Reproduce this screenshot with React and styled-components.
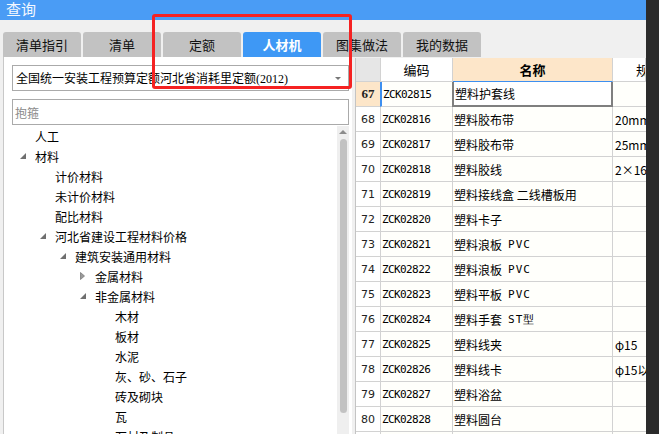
import styled, { createGlobalStyle } from "styled-components";

const GlobalStyle = createGlobalStyle`
  html, body {
    margin: 0;
    padding: 0;
    background: #f0f0f0;
    overflow: hidden;
  }
  body {
    font-family: "Noto Sans CJK SC", "DejaVu Sans", sans-serif;
    font-size: 12px;
    color: #000;
  }
  * {
    box-sizing: border-box;
  }
`;

const Frame = styled.div`
  position: relative;
  width: 659px;
  height: 434px;
  display: flex;
  overflow: hidden;
`;

const Main = styled.div`
  flex: 1;
  display: flex;
  flex-direction: column;
  min-width: 0;
`;

const DarkStrip = styled.div`
  width: 13px;
  background: #2b2b2b;
`;

const TitleBar = styled.div`
  height: 20px;
  flex-shrink: 0;
  background: #4a9cf5;
  color: #f4f8ff;
  font-size: 15px;
  line-height: 18px;
  padding-left: 6px;
  overflow: hidden;
`;

const TabBar = styled.div`
  display: flex;
  gap: 2px;
  padding: 12px 0 0 3px;
  height: 37px;
  flex-shrink: 0;
`;

const Tab = styled.div`
  width: 78px;
  height: 25px;
  border-radius: 3px 3px 0 0;
  background: ${(p) => (p.$active ? "#3e98f5" : "#c2c2c2")};
  color: ${(p) => (p.$active ? "#fff" : "#111")};
  font-weight: ${(p) => (p.$active ? "bold" : "normal")};
  font-size: 13px;
  display: flex;
  align-items: center;
  justify-content: center;
`;

const Content = styled.div`
  flex: 1;
  display: flex;
  gap: 3px;
  padding-left: 3px;
  min-height: 0;
`;

const LeftPanel = styled.div`
  width: 349px;
  flex-shrink: 0;
  background: #fff;
  border-left: 1px solid #c8c8c8;
  padding: 8px 3px 0 8px;
  display: flex;
  flex-direction: column;
`;

const Select = styled.div`
  height: 26px;
  border: 1px solid #aaa;
  display: flex;
  align-items: center;
  justify-content: space-between;
  padding: 0 7px 0 3px;
  white-space: nowrap;
  font-size: 12px;
`;

const Paren = styled.span`
  font-family: "Liberation Serif", serif;
  font-size: 12px;
`;

const Caret = styled.span`
  width: 0;
  height: 0;
  border-left: 3px solid transparent;
  border-right: 3px solid transparent;
  border-top: 3px solid #777;
`;

const Search = styled.div`
  margin-top: 8px;
  height: 26px;
  border: 1px solid #aaa;
  color: #8a8a8a;
  display: flex;
  align-items: center;
  padding-left: 2px;
`;

const TreeArea = styled.div`
  flex: 1;
  display: flex;
  margin-top: 1px;
  min-height: 0;
`;

const TreeList = styled.div`
  flex: 1;
  overflow: hidden;
`;

const TreeRow = styled.div`
  height: 20px;
  display: flex;
  align-items: center;
  padding-left: ${(p) => 8 + p.$level * 20}px;
  white-space: nowrap;
`;

const Toggle = styled.span`
  width: 15px;
  display: flex;
  align-items: center;
`;

const ScrollBar = styled.div`
  width: 12px;
  background: #efefef;
  display: flex;
  flex-direction: column;
  align-items: center;
  padding-top: 4px;
`;

const UpArrow = styled.span`
  width: 0;
  height: 0;
  border-left: 4px solid transparent;
  border-right: 4px solid transparent;
  border-bottom: 4px solid #8c8c8c;
`;

const Thumb = styled.div`
  margin-top: 5px;
  width: 7px;
  height: 274px;
  border-radius: 4px;
  background: #c2c2c2;
`;

const Grid = styled.div`
  flex: 1;
  margin-top: 1px;
  border-left: 1px solid #c4c4c4;
  display: grid;
  grid-template-columns: 25px 72px 160px 1fr;
  grid-auto-rows: 25px;
  grid-template-rows: 24px;
  align-content: start;
  background: #fffffb;
  overflow: hidden;
`;

const HeadCell = styled.div`
  border-right: 1px solid #d2d2d2;
  border-bottom: 1px solid ${(p) => (p.$sel ? "#3d8ff0" : "#d2d2d2")};
  background: ${(p) => p.$bg || "#fff"};
  font-weight: ${(p) => (p.$bold ? "bold" : "normal")};
  font-size: 13px;
  display: flex;
  align-items: center;
  justify-content: ${(p) => (p.$start ? "flex-start" : "center")};
  padding-left: ${(p) => (p.$start ? "23px" : "0")};
  white-space: nowrap;
  overflow: hidden;
`;

const NumCell = styled.div`
  border-right: 1px solid #d2d2d2;
  border-bottom: 1px solid #d2d2d2;
  background: ${(p) => (p.$cur ? "#fde6c9" : "#fff")};
  font-family: ${(p) => (p.$cur ? `"Liberation Serif", serif` : `"DejaVu Sans", sans-serif`)};
  font-weight: ${(p) => (p.$cur ? "bold" : "normal")};
  font-size: ${(p) => (p.$cur ? "13px" : "11px")};
  display: flex;
  align-items: center;
  justify-content: center;
  color: #222;
`;

const CodeCell = styled.div`
  border-right: 1px solid #d2d2d2;
  border-bottom: 1px solid #d2d2d2;
  border-left: ${(p) => (p.$cur ? "2px solid #3d8ff0" : "none")};
  margin-left: ${(p) => (p.$cur ? "-1px" : "0")};
  font-family: "DejaVu Sans Mono", monospace;
  font-size: 11px;
  letter-spacing: -0.6px;
  display: flex;
  align-items: center;
  padding-left: 1px;
`;

const NameCell = styled.div`
  border-right: ${(p) => (p.$cur ? "2px solid #7f7f7f" : "1px solid #d2d2d2")};
  border-bottom: ${(p) => (p.$cur ? "2px solid #7f7f7f" : "1px solid #d2d2d2")};
  border-left: ${(p) => (p.$cur ? "2px solid #7f7f7f" : "none")};
  margin-left: ${(p) => (p.$cur ? "-1px" : "0")};
  background: ${(p) => (p.$cur ? "#fff" : "transparent")};
  display: flex;
  align-items: center;
  padding-left: 1px;
  white-space: nowrap;
`;

const Latin = styled.span`
  font-family: "DejaVu Sans Mono", monospace;
  font-size: 11px;
  letter-spacing: 1px;
  margin-left: 6px;
`;

const SpecCell = styled.div`
  border-bottom: 1px solid #d2d2d2;
  display: flex;
  align-items: center;
  padding-left: 2px;
  white-space: nowrap;
  overflow: hidden;
`;

const Annotation = styled.div`
  position: absolute;
  left: 152px;
  top: 14px;
  width: 200px;
  height: 75px;
  border: 3px solid #f52222;
  border-radius: 3px;
  pointer-events: none;
`;

const tabs = ["清单指引", "清单", "定额", "人材机", "图集做法", "我的数据"];

const tree = [
  { label: "人工", level: 0 },
  { label: "材料", level: 0, open: true },
  { label: "计价材料", level: 1 },
  { label: "未计价材料", level: 1 },
  { label: "配比材料", level: 1 },
  { label: "河北省建设工程材料价格", level: 1, open: true },
  { label: "建筑安装通用材料", level: 2, open: true },
  { label: "金属材料", level: 3, open: false },
  { label: "非金属材料", level: 3, open: true },
  { label: "木材", level: 4 },
  { label: "板材", level: 4 },
  { label: "水泥", level: 4 },
  { label: "灰、砂、石子", level: 4 },
  { label: "砖及砌块", level: 4 },
  { label: "瓦", level: 4 },
  { label: "石材及制品", level: 4 },
];

const rows = [
  { n: 67, code: "ZCK02815", name: "塑料护套线" },
  { n: 68, code: "ZCK02816", name: "塑料胶布带", spec: "20mm×" },
  { n: 69, code: "ZCK02817", name: "塑料胶布带", spec: "25mm×" },
  { n: 70, code: "ZCK02818", name: "塑料胶线", spec: "2×16," },
  { n: 71, code: "ZCK02819", name: "塑料接线盒 二线槽板用" },
  { n: 72, code: "ZCK02820", name: "塑料卡子" },
  { n: 73, code: "ZCK02821", name: "塑料浪板", latin: "PVC" },
  { n: 74, code: "ZCK02822", name: "塑料浪板", latin: "PVC" },
  { n: 75, code: "ZCK02823", name: "塑料平板", latin: "PVC" },
  { n: 76, code: "ZCK02824", name: "塑料手套", latin: "ST型" },
  { n: 77, code: "ZCK02825", name: "塑料线夹", spec: "φ15" },
  { n: 78, code: "ZCK02826", name: "塑料线卡", spec: "φ15以" },
  { n: 79, code: "ZCK02827", name: "塑料浴盆" },
  { n: 80, code: "ZCK02828", name: "塑料圆台" },
  { n: 81, code: "ZCK02829", name: "塑料圆台" },
];

const Arrow = ({ open }) =>
  open ? (
    <svg width="6" height="6" viewBox="0 0 6 6">
      <polygon points="6,0 6,6 0,6" fill="#6f6f6f" />
    </svg>
  ) : (
    <svg width="5" height="8" viewBox="0 0 5 8">
      <polygon points="0.5,0.5 4.5,4 0.5,7.5" fill="#9a9a9a" stroke="#7a7a7a" strokeWidth="0.8" />
    </svg>
  );

export default function App() {
  return (
    <Frame>
      <GlobalStyle />
      <Main>
        <TitleBar>查询</TitleBar>
        <TabBar>
          {tabs.map((t) => (
            <Tab key={t} $active={t === "人材机"}>
              {t}
            </Tab>
          ))}
        </TabBar>
        <Content>
          <LeftPanel>
            <Select>
              <span>
                全国统一安装工程预算定额河北省消耗里定额<Paren>(2012)</Paren>
              </span>
              <Caret />
            </Select>
            <Search>抱箍</Search>
            <TreeArea>
              <TreeList>
                {tree.map((item, i) => (
                  <TreeRow key={i} $level={item.level}>
                    <Toggle>{item.open !== undefined && <Arrow open={item.open} />}</Toggle>
                    {item.label}
                  </TreeRow>
                ))}
              </TreeList>
              <ScrollBar>
                <UpArrow />
                <Thumb />
              </ScrollBar>
            </TreeArea>
          </LeftPanel>
          <Grid>
            <HeadCell $bg="#e6e6e6" />
            <HeadCell>编码</HeadCell>
            <HeadCell $bg="#fde6c9" $bold $sel>
              名称
            </HeadCell>
            <HeadCell $start>规</HeadCell>
            {rows.map((r) => {
              const cur = r.n === 67;
              return [
                <NumCell key={r.n + "n"} $cur={cur}>
                  {r.n}
                </NumCell>,
                <CodeCell key={r.n + "c"} $cur={cur}>
                  {r.code}
                </CodeCell>,
                <NameCell key={r.n + "m"} $cur={cur}>
                  {r.name}
                  {r.latin && <Latin>{r.latin}</Latin>}
                </NameCell>,
                <SpecCell key={r.n + "s"}>{r.spec}</SpecCell>,
              ];
            })}
          </Grid>
        </Content>
      </Main>
      <DarkStrip />
      <Annotation />
    </Frame>
  );
}
